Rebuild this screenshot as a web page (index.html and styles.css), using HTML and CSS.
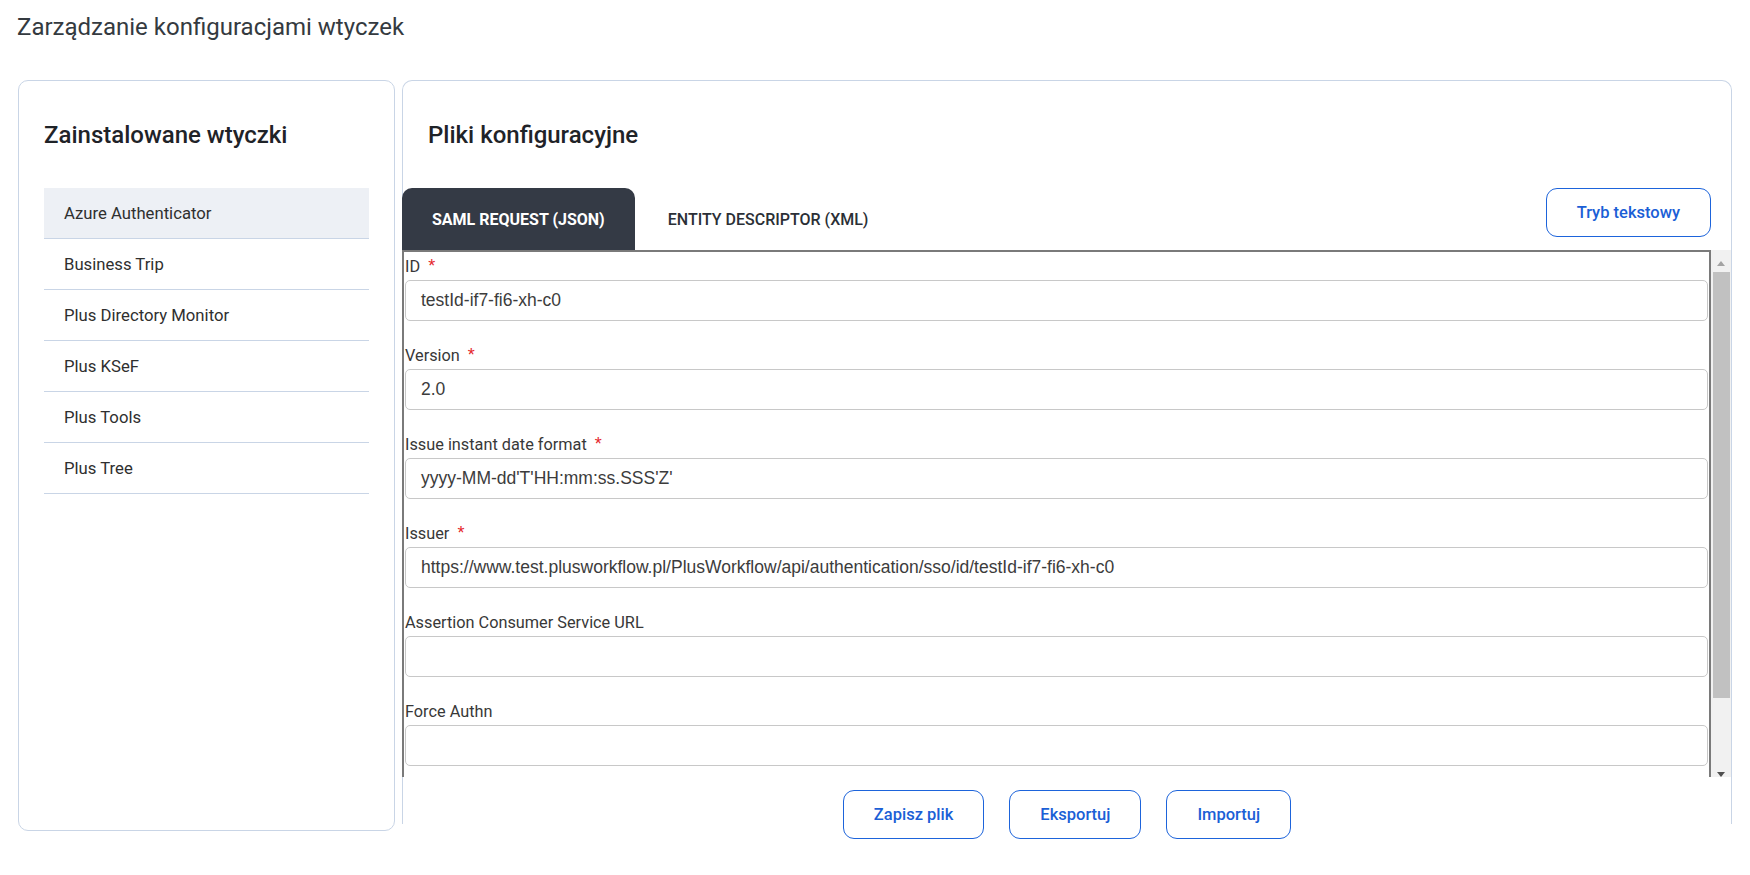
FILE: index.html
```html
<!DOCTYPE html>
<html lang="pl">
<head>
<meta charset="utf-8">
<title>Zarządzanie konfiguracjami wtyczek</title>
<link rel="stylesheet" href="styles.css">
</head>
<body>
<div class="page">
  <h1 class="page-title">Zarządzanie konfiguracjami wtyczek</h1>
  <div class="layout">
    <aside class="panel plugins">
      <h2 class="panel-title">Zainstalowane wtyczki</h2>
      <ul class="plugin-list">
        <li class="plugin active">Azure Authenticator</li>
        <li class="plugin">Business Trip</li>
        <li class="plugin">Plus Directory Monitor</li>
        <li class="plugin">Plus KSeF</li>
        <li class="plugin">Plus Tools</li>
        <li class="plugin">Plus Tree</li>
      </ul>
    </aside>
    <section class="panel config">
      <h2 class="panel-title">Pliki konfiguracyjne</h2>
      <div class="tabbar">
        <div class="tabs">
          <div class="tab active">SAML REQUEST (JSON)</div>
          <div class="tab">ENTITY DESCRIPTOR (XML)</div>
        </div>
        <button class="btn">Tryb tekstowy</button>
      </div>
      <div class="editor">
        <div class="form">
          <div class="field">
            <label class="label">ID<span class="req">*</span></label>
            <div class="input">testId-if7-fi6-xh-c0</div>
          </div>
          <div class="field">
            <label class="label">Version<span class="req">*</span></label>
            <div class="input">2.0</div>
          </div>
          <div class="field">
            <label class="label">Issue instant date format<span class="req">*</span></label>
            <div class="input">yyyy-MM-dd'T'HH:mm:ss.SSS'Z'</div>
          </div>
          <div class="field">
            <label class="label">Issuer<span class="req">*</span></label>
            <div class="input">https://www.test.plusworkflow.pl/PlusWorkflow/api/authentication/sso/id/testId-if7-fi6-xh-c0</div>
          </div>
          <div class="field">
            <label class="label">Assertion Consumer Service URL</label>
            <div class="input"></div>
          </div>
          <div class="field">
            <label class="label">Force Authn</label>
            <div class="input"></div>
          </div>
        </div>
        <div class="scrollbar">
          <div class="sb-up"></div>
          <div class="sb-track"><div class="sb-thumb"></div></div>
          <div class="sb-down"></div>
        </div>
      </div>
      <div class="actions">
        <button class="btn">Zapisz plik</button>
        <button class="btn">Eksportuj</button>
        <button class="btn">Importuj</button>
      </div>
    </section>
  </div>
</div>
</body>
</html>
```

FILE: styles.css
```css
* { box-sizing: border-box; }

html, body {
  margin: 0;
  padding: 0;
  background: #ffffff;
}

body {
  width: 1750px;
  height: 875px;
  overflow: hidden;
  font-family: Roboto, "Noto Sans", "Liberation Sans", Arial, sans-serif;
  color: #333333;
}

.page {
  padding: 11px 18px 0 17px;
}

.page-title {
  margin: 0;
  font-size: 24px;
  font-weight: 400;
  line-height: 32px;
  color: #343a40;
}

.layout {
  display: flex;
  gap: 7px;
  margin-top: 37px;
  padding-left: 1px;
}

.panel {
  border: 1px solid #c9d5e6;
  border-radius: 10px;
  background: #ffffff;
}

.panel-title {
  margin: 0;
  font-size: 24px;
  font-weight: 500;
  line-height: 30px;
  color: #1f2328;
}

/* left panel */
.plugins {
  width: 377px;
  height: 751px;
  flex-shrink: 0;
  padding: 39px 25px 0 25px;
}

.plugin-list {
  list-style: none;
  margin: 38px 0 0 0;
  padding: 0;
}

.plugin {
  height: 51px;
  display: flex;
  align-items: center;
  padding-left: 20px;
  border-bottom: 1px solid #c9d5e6;
  font-size: 16.7px;
  color: #2f2f2f;
}

.plugin.active {
  background: #edf0f5;
}

/* right panel */
.config {
  flex: 1;
  height: 744px;
  border-bottom: none;
  border-radius: 10px 10px 0 0;
  padding-top: 39px;
  display: flex;
  flex-direction: column;
}

.config .panel-title {
  margin-left: 25px;
  flex-shrink: 0;
}

.tabbar {
  flex-shrink: 0;
  height: 62px;
  margin: 38px 0 0 -1px;
  display: flex;
  justify-content: space-between;
  align-items: flex-start;
}

.tabs {
  display: flex;
  height: 62px;
}

.tab {
  display: flex;
  align-items: center;
  padding: 0 30px 0 33px;
  font-size: 16px;
  font-weight: 500;
  color: #2b2f36;
}

.tab.active {
  padding: 0 30px;
  background: #343a45;
  color: #ffffff;
  font-weight: 700;
  border-radius: 10px 10px 0 0;
}

.btn {
  height: 49px;
  padding: 0 30px;
  border: 1px solid #1d64db;
  border-radius: 11px;
  background: #ffffff;
  color: #1b5fd6;
  font-family: inherit;
  font-size: 16.5px;
  font-weight: 500;
  cursor: pointer;
}

.tabbar .btn {
  margin-right: 20px;
}

/* editor */
.editor {
  flex-shrink: 0;
  height: 527px;
  margin-left: -1px;
  display: flex;
  overflow: hidden;
}

.form {
  flex: 1;
  border: 2px solid #7a7a7a;
  border-bottom: none;
  padding: 4px 1px 0 1px;
  overflow: hidden;
}

.field {
  margin-bottom: 24px;
}

.label {
  display: block;
  margin-bottom: 2px;
  font-size: 16.3px;
  line-height: 22px;
  color: #383838;
}

.req {
  margin-left: 8px;
  font-family: "Liberation Sans", Arial, sans-serif;
  font-size: 18px;
  line-height: 0;
  color: #e5262b;
}

.input {
  height: 41px;
  display: flex;
  align-items: center;
  padding: 0 15px;
  border: 1px solid #c8c8c8;
  border-radius: 5px;
  font-family: "Liberation Sans", Arial, sans-serif;
  font-size: 17.5px;
  color: #3c3c3c;
  white-space: nowrap;
  overflow: hidden;
}

/* fake classic scrollbar */
.scrollbar {
  width: 20px;
  flex-shrink: 0;
  background: #f1f1f1;
  display: flex;
  flex-direction: column;
}

.sb-up {
  height: 22px;
  display: flex;
  justify-content: center;
  align-items: flex-end;
  padding-bottom: 6px;
}

.sb-up::before {
  content: "";
  width: 0;
  height: 0;
  border-left: 4.5px solid transparent;
  border-right: 4.5px solid transparent;
  border-bottom: 5px solid #a3a3a3;
}

.sb-track {
  flex: 1;
  padding: 0 1px 0 2px;
}

.sb-thumb {
  height: 426px;
  background: #c1c1c1;
}

.sb-down {
  height: 8px;
  display: flex;
  justify-content: center;
  padding-top: 3px;
  overflow: hidden;
}

.sb-down::before {
  content: "";
  width: 0;
  height: 0;
  border-left: 4.5px solid transparent;
  border-right: 4.5px solid transparent;
  border-top: 5px solid #505050;
}

/* bottom actions */
.actions {
  flex-shrink: 0;
  display: flex;
  justify-content: center;
  gap: 25px;
  margin-top: 13px;
}
```
